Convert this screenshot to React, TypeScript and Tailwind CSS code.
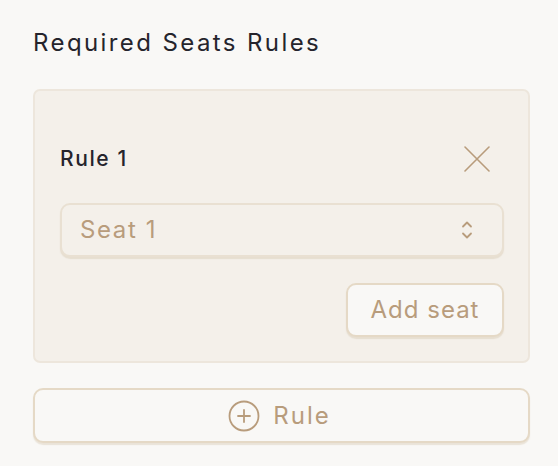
const font = { fontFamily: 'Inter, "Open Sans", "Liberation Sans", sans-serif' };

function CloseIcon() {
  return (
    <svg width="26" height="26" viewBox="0 0 26 26" fill="none" stroke="currentColor" strokeWidth="1.6" strokeLinecap="round">
      <path d="M1 1 25 25M25 1 1 25" />
    </svg>
  );
}

function UpDownIcon() {
  return (
    <svg width="12" height="20" viewBox="0 0 12 20" fill="none" stroke="currentColor" strokeWidth="1.8" strokeLinecap="round" strokeLinejoin="round">
      <path d="M2 6.5 6 2.5l4 4M2 13.5l4 4 4-4" />
    </svg>
  );
}

function PlusCircleIcon() {
  return (
    <svg width="32" height="32" viewBox="0 0 32 32" fill="none" stroke="currentColor" strokeWidth="1.8" strokeLinecap="round">
      <circle cx="16" cy="16" r="14.5" />
      <path d="M16 10v12M10 16h12" />
    </svg>
  );
}

export default function App() {
  return (
    <div className="min-h-[466px] bg-[#f9f8f6] pl-[33px] pr-[28px] pt-[29px]" style={font}>
      <h2 className="text-[24px] leading-[28px] tracking-[2.4px] text-[#25242c]">Required Seats Rules</h2>

      <div className="mt-[32px] rounded-[7px] border-2 border-[#ede6dc] bg-[#f4f0ea] pb-[24px] pl-[25px] pr-[24px] pt-[54px]">
        <div className="flex h-[28px] items-center justify-between">
          <span className="text-[21px] font-medium tracking-[1.6px] text-[#25242c]">Rule 1</span>
          <span className="mr-[14px] text-[#b89c7c]">
            <CloseIcon />
          </span>
        </div>

        <div className="mt-[30px] flex h-[54px] items-center justify-between rounded-[10px] border-2 border-[#e9e0d2] bg-[#f4f0ea] pl-[18px] pr-[29px] shadow-[0_2px_1px_rgba(205,188,160,0.35)]">
          <span className="text-[24px] tracking-[1.6px] text-[#b89c7c]">Seat 1</span>
          <span className="text-[#b89c7c]">
            <UpDownIcon />
          </span>
        </div>

        <div className="mt-[26px] flex justify-end">
          <button className="h-[54px] w-[158px] rounded-[10px] border-2 border-[#e5d9c6] bg-[#f9f8f6] text-[24px] tracking-[1px] text-[#b89c7c] shadow-[0_2px_1px_rgba(205,188,160,0.35)]">
            Add seat
          </button>
        </div>
      </div>

      <button className="mt-[25px] flex h-[55px] w-full items-center justify-center gap-[13px] rounded-[10px] border-2 border-[#e5d9c6] bg-[#f9f8f6] pr-[4px] text-[24px] tracking-[2px] text-[#b89c7c] shadow-[0_2px_1px_rgba(205,188,160,0.35)]">
        <PlusCircleIcon />
        Rule
      </button>
    </div>
  );
}
